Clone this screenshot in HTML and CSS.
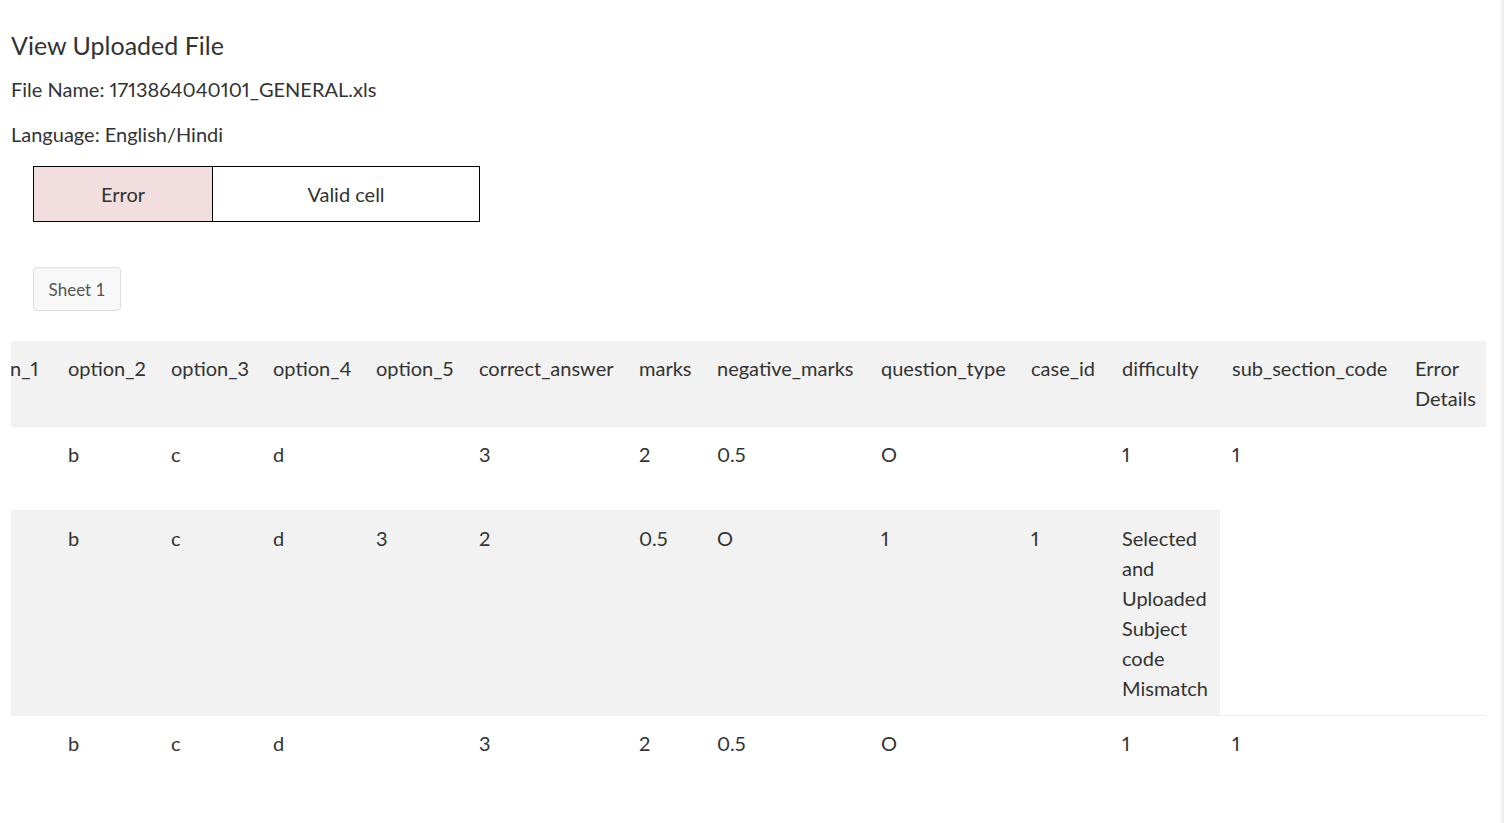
FILE: index.html
```html
<!DOCTYPE html>
<html lang="en">
<head>
<meta charset="utf-8">
<title>View Uploaded File</title>
<link rel="stylesheet" href="styles.css">
</head>
<body>
<div class="page">
  <h3 class="title">View Uploaded File</h3>
  <p class="meta">File Name: 1713864040101_GENERAL.xls</p>
  <p class="meta">Language: English/Hindi</p>

  <div class="legend">
    <div class="legend-cell legend-error">Error</div>
    <div class="legend-cell legend-valid">Valid cell</div>
  </div>

  <div class="sheets">
    <button class="sheet-btn" type="button">Sheet 1</button>
  </div>

  <div class="table-wrap">
    <table class="data-table">
      <colgroup>
        <col style="width:104px">
        <col style="width:103px">
        <col style="width:102px">
        <col style="width:103px">
        <col style="width:103px">
        <col style="width:160px">
        <col style="width:78px">
        <col style="width:164px">
        <col style="width:150px">
        <col style="width:91px">
        <col style="width:110px">
        <col style="width:183px">
        <col style="width:83px">
      </colgroup>
      <thead>
        <tr>
          <th>option_1</th>
          <th>option_2</th>
          <th>option_3</th>
          <th>option_4</th>
          <th>option_5</th>
          <th>correct_answer</th>
          <th>marks</th>
          <th>negative_marks</th>
          <th>question_type</th>
          <th>case_id</th>
          <th>difficulty</th>
          <th>sub_section_code</th>
          <th>Error Details</th>
        </tr>
      </thead>
      <tbody>
        <tr>
          <td></td>
          <td>b</td>
          <td>c</td>
          <td>d</td>
          <td></td>
          <td>3</td>
          <td>2</td>
          <td>0.5</td>
          <td>O</td>
          <td></td>
          <td>1</td>
          <td>1</td>
          <td></td>
        </tr>
        <tr>
          <td></td>
          <td>b</td>
          <td>c</td>
          <td>d</td>
          <td>3</td>
          <td>2</td>
          <td>0.5</td>
          <td>O</td>
          <td>1</td>
          <td>1</td>
          <td>Selected and Uploaded Subject code Mismatch</td>
        </tr>
        <tr>
          <td></td>
          <td>b</td>
          <td>c</td>
          <td>d</td>
          <td></td>
          <td>3</td>
          <td>2</td>
          <td>0.5</td>
          <td>O</td>
          <td></td>
          <td>1</td>
          <td>1</td>
          <td></td>
        </tr>
      </tbody>
    </table>
  </div>
</div>
</body>
</html>
```

FILE: styles.css
```css
html, body {
  margin: 0;
  padding: 0;
}

body {
  background: #eceff3;
  font-family: "Lato", "Noto Sans", "Liberation Sans", sans-serif;
  font-variant-numeric: proportional-nums;
  color: #333333;
}

.page {
  background: #ffffff;
  margin-right: 3px;
  min-height: 100vh;
  padding: 29px 15px 0 11px;
  box-sizing: border-box;
  overflow: hidden;
}

.title {
  margin: 0;
  font-size: 25px;
  font-weight: 400;
  line-height: 32px;
  color: #333333;
}

.meta {
  margin: 13px 0 0;
  font-size: 20px;
  line-height: 30px;
}

.meta + .meta {
  margin-top: 15px;
}

.legend {
  display: flex;
  width: 445px;
  margin: 17px 0 0 22px;
  border: 1px solid #000000;
  font-size: 20px;
}

.legend-cell {
  display: flex;
  align-items: center;
  justify-content: center;
  height: 54px;
}

.legend-error {
  width: 178px;
  background: #f2dede;
  border-right: 1px solid #000000;
}

.legend-valid {
  flex: 1;
}

.sheets {
  margin: 45px 0 0 22px;
}

.sheet-btn {
  width: 88px;
  height: 44px;
  padding: 0;
  background: #f8f8f8;
  border: 1px solid #dddddd;
  border-radius: 4px;
  font-family: inherit;
  font-size: 17px;
  color: #555555;
}

.table-wrap {
  margin-top: 30px;
  display: flex;
  justify-content: flex-end;
  overflow: hidden;
}

.data-table {
  flex-shrink: 0;
  width: 1534px;
  table-layout: fixed;
  border-collapse: collapse;
  font-size: 20px;
  line-height: 30px;
  color: #333333;
}

.data-table th,
.data-table td {
  padding: 12px 12px;
  text-align: left;
  vertical-align: top;
  font-weight: 400;
}

.data-table thead tr {
  background: #f2f2f2;
}

.data-table th {
  padding-bottom: 13px;
}

.data-table tbody tr {
  height: 84px;
}

.data-table tbody tr:last-child {
  height: 110px;
}

.data-table tbody td {
  border-top: 1px solid #efefef;
}

.data-table tbody tr:nth-child(even) {
  background: #f2f2f2;
}
```
